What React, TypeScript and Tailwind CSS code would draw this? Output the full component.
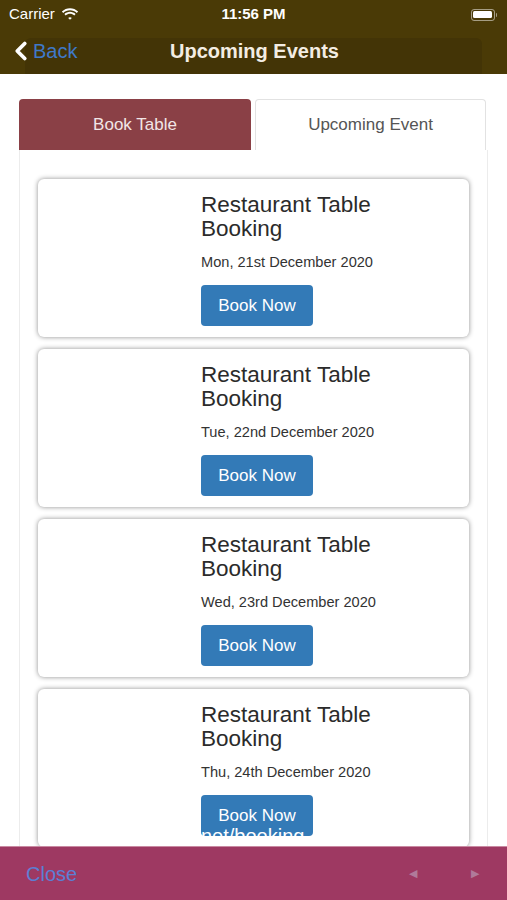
import { ChevronLeft } from "lucide-react";

const events = [
  "Mon, 21st December 2020",
  "Tue, 22nd December 2020",
  "Wed, 23rd December 2020",
  "Thu, 24th December 2020",
];

function Wifi() {
  return (
    <svg width="18" height="13" viewBox="0 0 18 13" fill="white">
      <path d="M9 2.2c2.6 0 5 1 6.8 2.7l1.3-1.3C14.9 1.4 12 .2 9 .2S3.1 1.4.9 3.6l1.3 1.3C4 3.2 6.4 2.2 9 2.2z" />
      <path d="M9 5.7c1.6 0 3.1.6 4.3 1.7l1.3-1.3C13.1 4.7 11.1 3.8 9 3.8s-4.1.9-5.6 2.3l1.3 1.3C5.9 6.3 7.4 5.7 9 5.7z" />
      <path d="M9 9.2c.7 0 1.3.3 1.8.7L9 11.8 7.2 9.9c.5-.4 1.1-.7 1.8-.7z" />
    </svg>
  );
}

function Battery() {
  return (
    <div className="flex items-center">
      <div className="w-[24px] h-[12px] rounded-[3px] border border-white/50 p-[1.5px]">
        <div className="w-full h-full rounded-[1.5px] bg-white" />
      </div>
      <div className="w-[1.5px] h-[4px] bg-white/50 rounded-r-sm ml-[1px]" />
    </div>
  );
}

function EventCard({ date }: { date: string }) {
  return (
    <div className="h-[158px] shrink-0 bg-white rounded-[6px] shadow-[0_0_5px_rgba(0,0,0,0.45)] pl-[163px] pt-[14px]">
      <div className="text-[22.5px] leading-[24px] text-[#2b2b2b]">
        Restaurant Table
        <br />
        Booking
      </div>
      <div className="text-[14.6px] leading-[18px] text-[#333] mt-[12px]">{date}</div>
      <button className="mt-[14px] w-[112px] h-[41px] rounded-[4px] bg-[#337ab7] text-white text-[17px]">
        Book Now
      </button>
    </div>
  );
}

export default function App() {
  return (
    <div className="w-[507px] h-[900px] flex flex-col overflow-hidden bg-white font-['Liberation_Sans',Arial,sans-serif]">
      <div className="h-[74px] shrink-0 bg-[#4a3a06] flex flex-col">
        <div className="h-[28px] flex items-center justify-between px-[9px] pt-[1px] text-white text-[15px]">
          <div className="flex items-center gap-[6px] w-[100px]">
            <span>Carrier</span>
            <Wifi />
          </div>
          <span className="font-bold">11:56 PM</span>
          <div className="w-[100px] flex justify-end pr-[1px]">
            <Battery />
          </div>
        </div>
        <div className="flex-1 relative flex items-end">
          <div className="ml-[25px] w-[457px] h-[36px] rounded-t-[6px] bg-[#433406]" />
          <div className="absolute inset-0 flex items-center pb-[1px]">
            <div className="flex items-center pl-[6px] w-[116px]">
              <ChevronLeft className="text-white" size={30} strokeWidth={3} />
              <span className="text-[20px] text-[#3f79c9] -ml-[3px]">Back</span>
            </div>
            <span className="text-[20px] font-bold text-[#f3ede3] ml-[54px]">Upcoming Events</span>
          </div>
        </div>
      </div>

      <div className="flex-1 relative overflow-hidden pt-[25px] px-[19px]">
        <div className="flex gap-[4px] pr-[2px]">
          <div className="w-[232px] h-[51px] rounded-t-[4px] bg-[#8a4046] text-[#f2e6e6] text-[17px] flex items-center justify-center">
            Book Table
          </div>
          <div className="flex-1 h-[51px] rounded-t-[4px] border border-b-0 border-[#e2e2e2] text-[#555] text-[17px] flex items-center justify-center">
            Upcoming Event
          </div>
        </div>
        <div className="border-x border-[#ececec] h-[800px] pt-[29px] pl-[18px] pr-[18px] flex flex-col gap-[12px]">
          {events.map((d) => (
            <EventCard key={d} date={d} />
          ))}
        </div>
        <div className="absolute left-[201px] bottom-[-2px] text-white text-[20px] leading-[24px]">
          net/booking
        </div>
      </div>

      <div className="h-[54px] shrink-0 bg-[#9e3962] border-t border-[#c98aa2] flex items-center px-[26px]">
        <span className="text-[20px] text-[#5b7fd4]">Close</span>
        <div className="ml-auto flex items-center gap-[54px] pr-[2px] text-[#b07a9a] text-[11px]">
          <span>◀</span>
          <span>▶</span>
        </div>
      </div>
    </div>
  );
}
